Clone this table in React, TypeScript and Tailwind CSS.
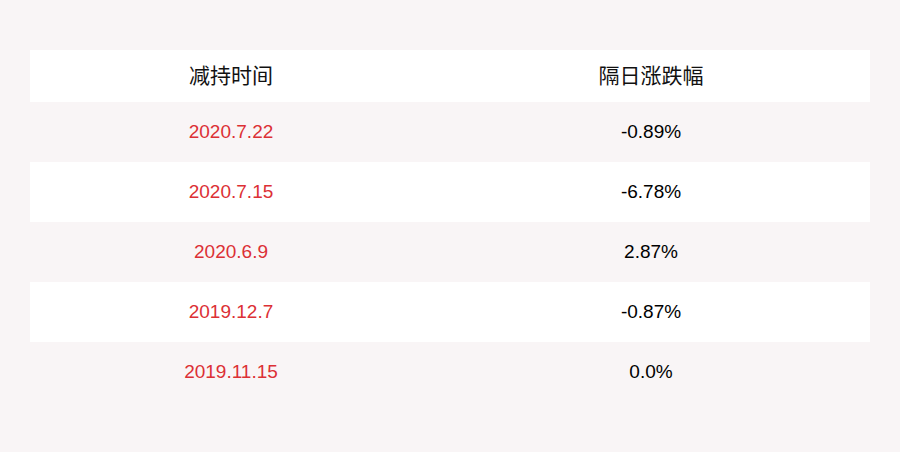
const rows = [
  { date: '2020.7.22', change: '-0.89%' },
  { date: '2020.7.15', change: '-6.78%' },
  { date: '2020.6.9', change: '2.87%' },
  { date: '2019.12.7', change: '-0.87%' },
  { date: '2019.11.15', change: '0.0%' },
];

export default function App() {
  return (
    <div className="w-[900px] h-[452px] bg-[#f9f5f6] pt-[50px] px-[30px] font-['Liberation_Sans','Noto_Sans_CJK_SC',sans-serif]">
      <div className="grid grid-cols-[402px_438px] h-[52px] bg-white items-center text-[21px] text-[#111]">
        <div className="text-center">减持时间</div>
        <div className="text-center">隔日涨跌幅</div>
      </div>
      {rows.map((r, i) => (
        <div
          key={r.date}
          className={`grid grid-cols-[402px_438px] h-[60px] items-center text-[19px] ${i % 2 === 0 ? 'bg-[#f9f5f6]' : 'bg-white'}`}
        >
          <div className="text-center text-[#dc3035]">{r.date}</div>
          <div className="text-center text-black">{r.change}</div>
        </div>
      ))}
    </div>
  );
}
